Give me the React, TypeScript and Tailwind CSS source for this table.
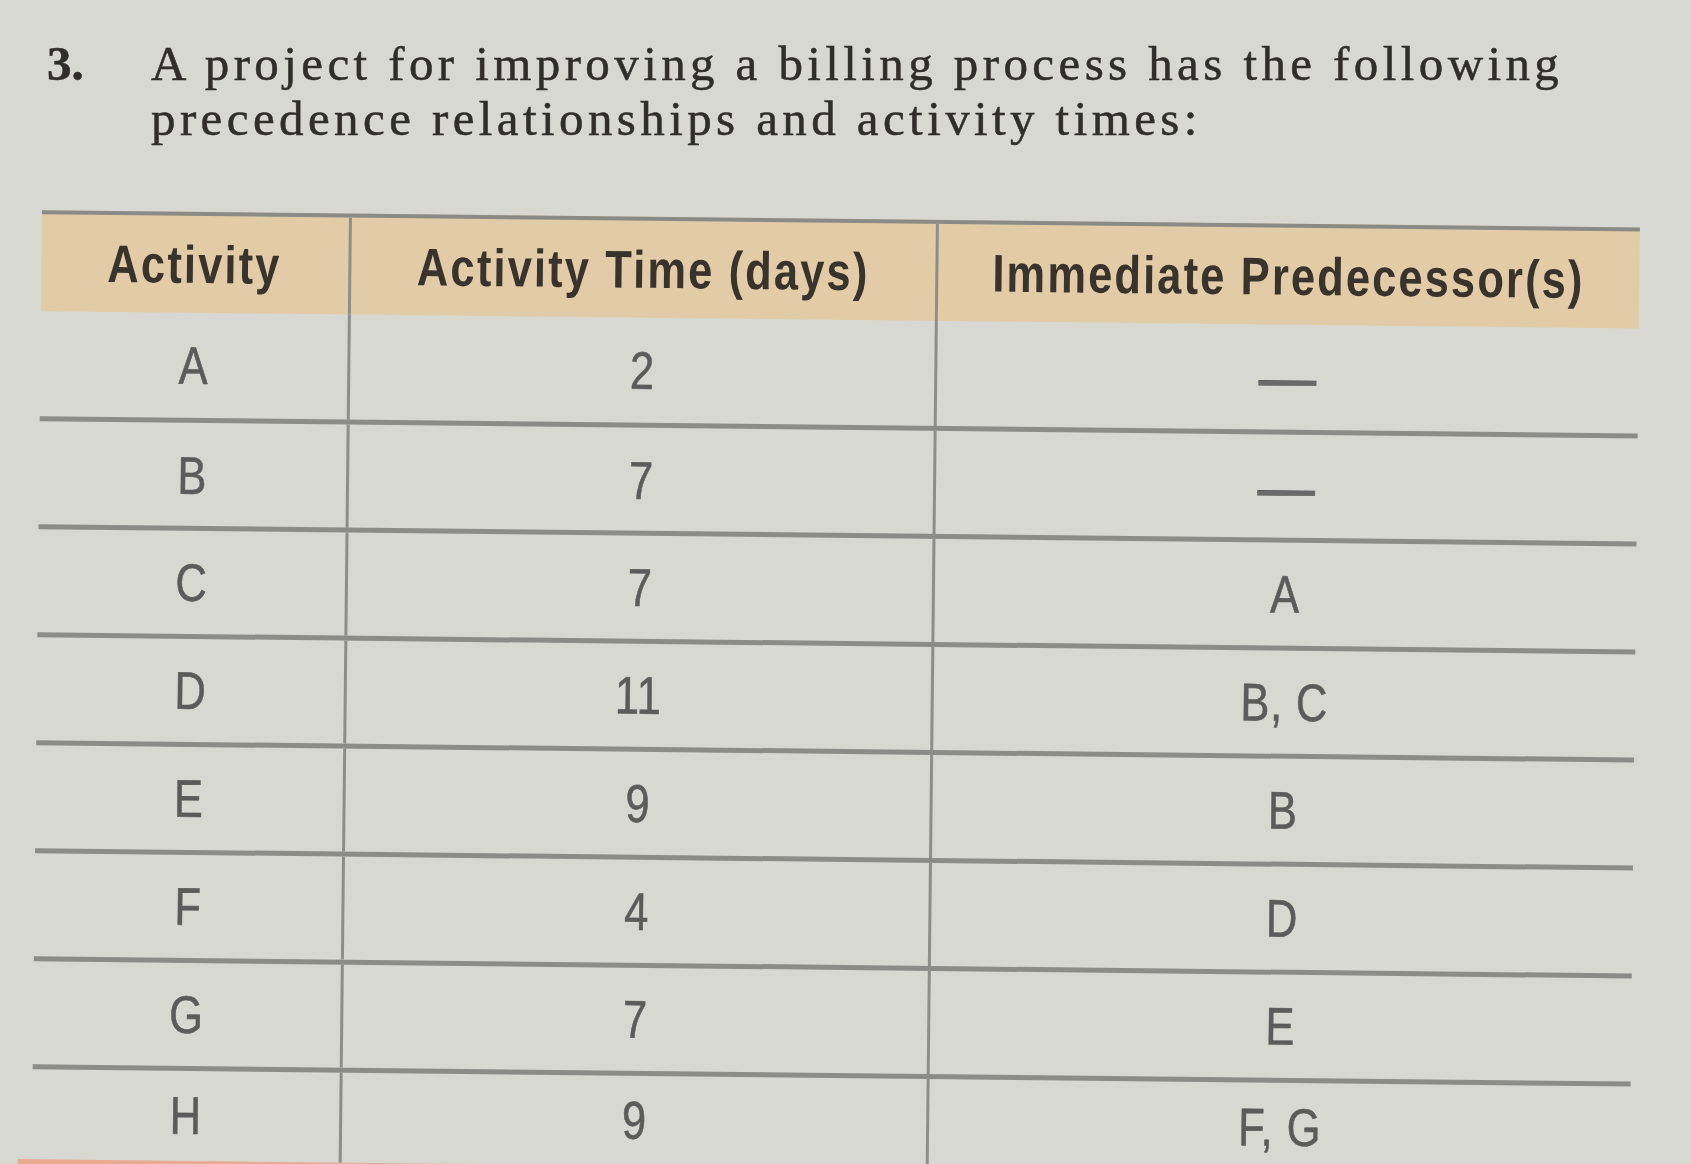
const rows = [
  { activity: "A", time: "2", pred: "—" },
  { activity: "B", time: "7", pred: "—" },
  { activity: "C", time: "7", pred: "A" },
  { activity: "D", time: "11", pred: "B, C" },
  { activity: "E", time: "9", pred: "B" },
  { activity: "F", time: "4", pred: "D" },
  { activity: "G", time: "7", pred: "E" },
  { activity: "H", time: "9", pred: "F, G" },
];

function Cell({ children, last, bold }: { children: React.ReactNode; last?: boolean; bold?: boolean }) {
  return (
    <div
      className={`flex items-center justify-center ${last ? "" : "border-r-[3px] border-[#8d8e8a]"} ${
        bold
          ? "font-bold tracking-[2.6px] text-[#3a332b]"
          : "tracking-[1px] text-[#5b5b5b] [-webkit-text-stroke:0.6px_#5b5b5b]"
      }`}
    >
      {/* condensed face is not installed, so squeeze Liberation Sans */}
      <span className="inline-block scale-x-[0.82] whitespace-nowrap">{children}</span>
    </div>
  );
}

export default function App() {
  return (
    <div className="relative h-[1164px] w-[1691px] overflow-hidden bg-[#d7d8d2] pt-[36px]">
      {/* question text */}
      <div className="flex pl-[47px] font-['Liberation_Serif',serif] text-[49px] leading-[55px] tracking-[4.4px] text-[#302e2b] [-webkit-text-stroke:0.5px_#302e2b]">
        <span className="w-[104px] shrink-0 font-bold tracking-normal">3.</span>
        <p className="w-[1500px] whitespace-nowrap">
          A project for improving a billing process has the following
          <br />
          precedence relationships and activity times:
        </p>
      </div>

      {/* table, photographed slightly askew */}
      <div className="ml-[38px] mt-[73px] w-[1598px] origin-[807px_364px] rotate-[0.62deg] font-['Liberation_Sans',Arial,sans-serif] text-[53px]">
        <div className="grid h-[101px] grid-cols-[310px_587px_701px] border-t-4 border-[#8a8a86] bg-[#e2cca8]">
          <Cell bold>Activity</Cell>
          <Cell bold>Activity Time (days)</Cell>
          <Cell bold last>
            Immediate Predecessor(s)
          </Cell>
        </div>
        {rows.map((r, i) => (
          <div
            key={r.activity}
            className={`grid grid-cols-[310px_587px_701px] ${
              i === 0 ? "h-[110px]" : i === rows.length - 1 ? "h-[90px]" : "h-[108px]"
            } ${i === rows.length - 1 ? "" : "border-b-[5px] border-[#8b8c88]"}`}
          >
            <Cell>{r.activity}</Cell>
            <Cell>{r.time}</Cell>
            <Cell last>
              {r.pred === "—" ? <span className="text-[70px] text-[#6a6a6a]">—</span> : r.pred}
            </Cell>
          </div>
        ))}
        <div className="-ml-[14px] h-[10px] w-[1612px] bg-[#e8ab92]" />
      </div>
    </div>
  );
}
